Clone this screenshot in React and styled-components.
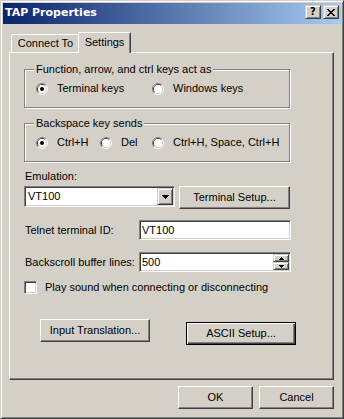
import React from "react";
import styled, { createGlobalStyle } from "styled-components";

const Global = createGlobalStyle`
  html, body { margin: 0; padding: 0; background: #d4d0c8; }
  body {
    font-family: "Liberation Sans", Arial, sans-serif;
    font-size: 11px;
    line-height: 13px;
    color: #000;
  }
  * { box-sizing: border-box; }
`;

const Window = styled.div`
  width: 344px;
  height: 419px;
  background: #d4d0c8;
  border: 1px solid;
  border-color: #d4d0c8 #404040 #404040 #d4d0c8;
  box-shadow: inset 1px 1px #fff, inset -1px -1px #808080;
  padding: 2px;
  display: flex;
  flex-direction: column;
`;

const TitleBar = styled.div`
  height: 21px;
  flex: none;
  background: linear-gradient(to right, #0a246a, #a6caf0);
  display: flex;
  align-items: flex-start;
  justify-content: space-between;
  padding: 0 2px;
`;

const Title = styled.div`
  font-family: "DejaVu Sans", Verdana, sans-serif;
  font-weight: bold;
  font-size: 11px;
  line-height: 20px;
  color: #fff;
`;

const CaptionButtons = styled.div`
  display: flex;
  gap: 2px;
  padding-top: 2px;
`;

const CaptionButton = styled.div`
  width: 16px;
  height: 14px;
  background: #d4d0c8;
  border: 1px solid;
  border-color: #d4d0c8 #404040 #404040 #d4d0c8;
  box-shadow: inset 1px 1px #fff, inset -1px -1px #808080;
  display: flex;
  align-items: center;
  justify-content: center;
  font-family: "DejaVu Sans", Verdana, sans-serif;
  font-weight: bold;
  font-size: 10px;
  line-height: 12px;
`;

const Body = styled.div`
  flex: 1;
  display: flex;
  flex-direction: column;
  padding: 8px 7px 7px 6px;
`;

const TabsRow = styled.div`
  height: 20px;
  display: flex;
  align-items: flex-end;
  padding-left: 2px;
`;

const Tab = styled.div`
  position: relative;
  width: ${(p) => p.$w}px;
  height: ${(p) => (p.$active ? 21 : 18)}px;
  margin: ${(p) => (p.$active ? "0 -2px -1px -2px" : "0")};
  z-index: ${(p) => (p.$active ? 2 : 1)};
  background: #d4d0c8;
  border-left: 1px solid #fff;
  border-top: 1px solid #fff;
  border-right: 1px solid #404040;
  border-radius: 2px 2px 0 0;
  box-shadow: inset -1px 0 #808080;
  text-align: center;
  padding-top: ${(p) => (p.$active ? 3 : 2)}px;
`;

const Panel = styled.div`
  height: 328px;
  flex: none;
  border: 1px solid;
  border-color: #fff #404040 #404040 #fff;
  box-shadow: inset -1px -1px #808080;
  padding: 16px 0 0 14px;
  display: flex;
  flex-direction: column;
  align-items: flex-start;
`;

const Group = styled.div`
  width: 266px;
  height: 39px;
  margin-top: ${(p) => p.$mt || 0}px;
  border: 1px solid #808080;
  box-shadow: inset 1px 1px #fff, 1px 1px #fff;
  padding-left: 11px;
`;

const GroupLabel = styled.div`
  width: fit-content;
  margin: -7px 0 0 -2px;
  padding: 0 2px;
  background: #d4d0c8;
`;

const RadioRow = styled.div`
  display: flex;
  margin-top: 6px;
`;

const RadioItem = styled.label`
  display: flex;
  align-items: center;
  gap: 9px;
  width: ${(p) => (p.$w ? `${p.$w}px` : "auto")};
  flex: none;
`;

const RadioIcon = ({ checked }) => (
  <svg width="12" height="12" viewBox="0 0 12 12">
    <path d="M2.11 9.89 A5.5 5.5 0 0 1 9.89 2.11" fill="none" stroke="#808080" />
    <path d="M9.89 2.11 A5.5 5.5 0 0 1 2.11 9.89" fill="none" stroke="#fff" />
    <path d="M2.82 9.18 A4.5 4.5 0 0 1 9.18 2.82" fill="none" stroke="#404040" />
    <path d="M9.18 2.82 A4.5 4.5 0 0 1 2.82 9.18" fill="none" stroke="#d4d0c8" />
    <circle cx="6" cy="6" r="4" fill="#fff" />
    {checked && <circle cx="6" cy="6" r="2" fill="#000" />}
  </svg>
);

const FieldLabel = styled.div`
  margin: ${(p) => p.$m || "0"};
  width: ${(p) => (p.$w ? `${p.$w}px` : "auto")};
  flex: none;
`;

const Row = styled.div`
  display: flex;
  align-items: ${(p) => p.$align || "center"};
  gap: ${(p) => p.$gap || 0}px;
  margin-top: ${(p) => p.$mt || 0}px;
`;

const Sunken = styled.div`
  width: ${(p) => p.$w}px;
  height: ${(p) => p.$h}px;
  background: #fff;
  border: 1px solid;
  border-color: #808080 #fff #fff #808080;
  box-shadow: inset 1px 1px #404040, inset -1px -1px #d4d0c8;
  display: flex;
  align-items: center;
  justify-content: space-between;
  padding: 1px;
`;

const FieldText = styled.div`
  padding-left: ${(p) => p.$pl || 1}px;
`;

const ComboButton = styled.div`
  width: 16px;
  height: 17px;
  background: #d4d0c8;
  border: 1px solid;
  border-color: #d4d0c8 #404040 #404040 #d4d0c8;
  box-shadow: inset 1px 1px #fff, inset -1px -1px #808080;
  display: flex;
  align-items: center;
  justify-content: center;
`;

const SpinStack = styled.div`
  display: flex;
  flex-direction: column;
  width: 16px;
  height: 16px;
`;

const SpinButton = styled.div`
  flex: 1;
  background: #d4d0c8;
  border: 1px solid;
  border-color: #d4d0c8 #404040 #404040 #d4d0c8;
  box-shadow: inset 1px 1px #fff, inset -1px -1px #808080;
  display: flex;
  align-items: center;
  justify-content: center;
`;

const Button = styled.div`
  width: ${(p) => p.$w}px;
  height: 23px;
  margin-top: ${(p) => p.$mt || 0}px;
  margin-left: ${(p) => p.$ml || 0}px;
  background: #d4d0c8;
  border: 1px solid;
  border-color: ${(p) => (p.$default ? "#000" : "#fff #404040 #404040 #fff")};
  box-shadow: ${(p) =>
    p.$default
      ? "inset 1px 1px #fff, inset -1px -1px #404040, inset -2px -2px #808080"
      : "inset -1px -1px #808080, inset 1px 1px #d4d0c8"};
  display: flex;
  align-items: center;
  justify-content: center;
  flex: none;
`;

const CheckBox = styled.div`
  width: 13px;
  height: 13px;
  background: #fff;
  border: 1px solid;
  border-color: #808080 #fff #fff #808080;
  box-shadow: inset 1px 1px #404040, inset -1px -1px #d4d0c8;
  flex: none;
`;

const ButtonBar = styled.div`
  display: flex;
  justify-content: flex-end;
  gap: 6px;
  margin-top: 6px;
`;

const DownArrow = ({ w = 7 }) => {
  const rows = Math.ceil(w / 2);
  let d = "";
  for (let i = 0; i < rows; i++) d += `M${i} ${i}h${w - 2 * i}v1h-${w - 2 * i}z`;
  return (
    <svg width={w} height={rows} shapeRendering="crispEdges">
      <path d={d} fill="#000" />
    </svg>
  );
};

const UpArrow = ({ w = 5 }) => {
  const rows = Math.ceil(w / 2);
  let d = "";
  for (let i = 0; i < rows; i++) d += `M${i} ${rows - 1 - i}h${w - 2 * i}v1h-${w - 2 * i}z`;
  return (
    <svg width={w} height={rows} shapeRendering="crispEdges">
      <path d={d} fill="#000" />
    </svg>
  );
};

const CloseGlyph = () => {
  let d = "";
  for (let y = 0; y < 7; y++) {
    d += `M${y} ${y}h2v1h-2z`;
    d += `M${6 - y} ${y}h2v1h-2z`;
  }
  return (
    <svg width="8" height="7" shapeRendering="crispEdges">
      <path d={d} fill="#000" />
    </svg>
  );
};

export default function App() {
  return (
    <>
      <Global />
      <Window>
        <TitleBar>
          <Title>TAP Properties</Title>
          <CaptionButtons>
            <CaptionButton>?</CaptionButton>
            <CaptionButton>
              <CloseGlyph />
            </CaptionButton>
          </CaptionButtons>
        </TitleBar>
        <Body>
          <TabsRow>
            <Tab $w={69}>Connect To</Tab>
            <Tab $w={53} $active>
              Settings
            </Tab>
          </TabsRow>
          <Panel>
            <Group>
              <GroupLabel>Function, arrow, and ctrl keys act as</GroupLabel>
              <RadioRow>
                <RadioItem $w={116}>
                  <RadioIcon checked />
                  Terminal keys
                </RadioItem>
                <RadioItem>
                  <RadioIcon />
                  Windows keys
                </RadioItem>
              </RadioRow>
            </Group>
            <Group $mt={15}>
              <GroupLabel>Backspace key sends</GroupLabel>
              <RadioRow>
                <RadioItem $w={64}>
                  <RadioIcon checked />
                  Ctrl+H
                </RadioItem>
                <RadioItem $w={52}>
                  <RadioIcon />
                  Del
                </RadioItem>
                <RadioItem>
                  <RadioIcon />
                  Ctrl+H, Space, Ctrl+H
                </RadioItem>
              </RadioRow>
            </Group>
            <FieldLabel $m="8px 0 0 1px">Emulation:</FieldLabel>
            <Row $mt={3} $gap={4} $align="flex-start">
              <Sunken $w={151} $h={21}>
                <FieldText $pl={2}>VT100</FieldText>
                <ComboButton>
                  <DownArrow w={7} />
                </ComboButton>
              </Sunken>
              <Button $w={111}>Terminal Setup...</Button>
            </Row>
            <Row $mt={11}>
              <FieldLabel $w={114} $m="0 0 0 1px">
                Telnet terminal ID:
              </FieldLabel>
              <Sunken $w={152} $h={20}>
                <FieldText>VT100</FieldText>
              </Sunken>
            </Row>
            <Row $mt={12}>
              <FieldLabel $w={114} $m="0 0 0 1px">
                Backscroll buffer lines:
              </FieldLabel>
              <Sunken $w={152} $h={20}>
                <FieldText>500</FieldText>
                <SpinStack>
                  <SpinButton>
                    <UpArrow w={5} />
                  </SpinButton>
                  <SpinButton>
                    <DownArrow w={5} />
                  </SpinButton>
                </SpinStack>
              </Sunken>
            </Row>
            <Row $mt={9} $gap={8}>
              <CheckBox />
              <span>Play sound when connecting or disconnecting</span>
            </Row>
            <Row $mt={25} $align="flex-start">
              <Button $w={110} $ml={16}>
                Input Translation...
              </Button>
              <Button $w={110} $ml={36} $mt={3} $default>
                ASCII Setup...
              </Button>
            </Row>
          </Panel>
          <ButtonBar>
            <Button $w={75}>OK</Button>
            <Button $w={75}>Cancel</Button>
          </ButtonBar>
        </Body>
      </Window>
    </>
  );
}
